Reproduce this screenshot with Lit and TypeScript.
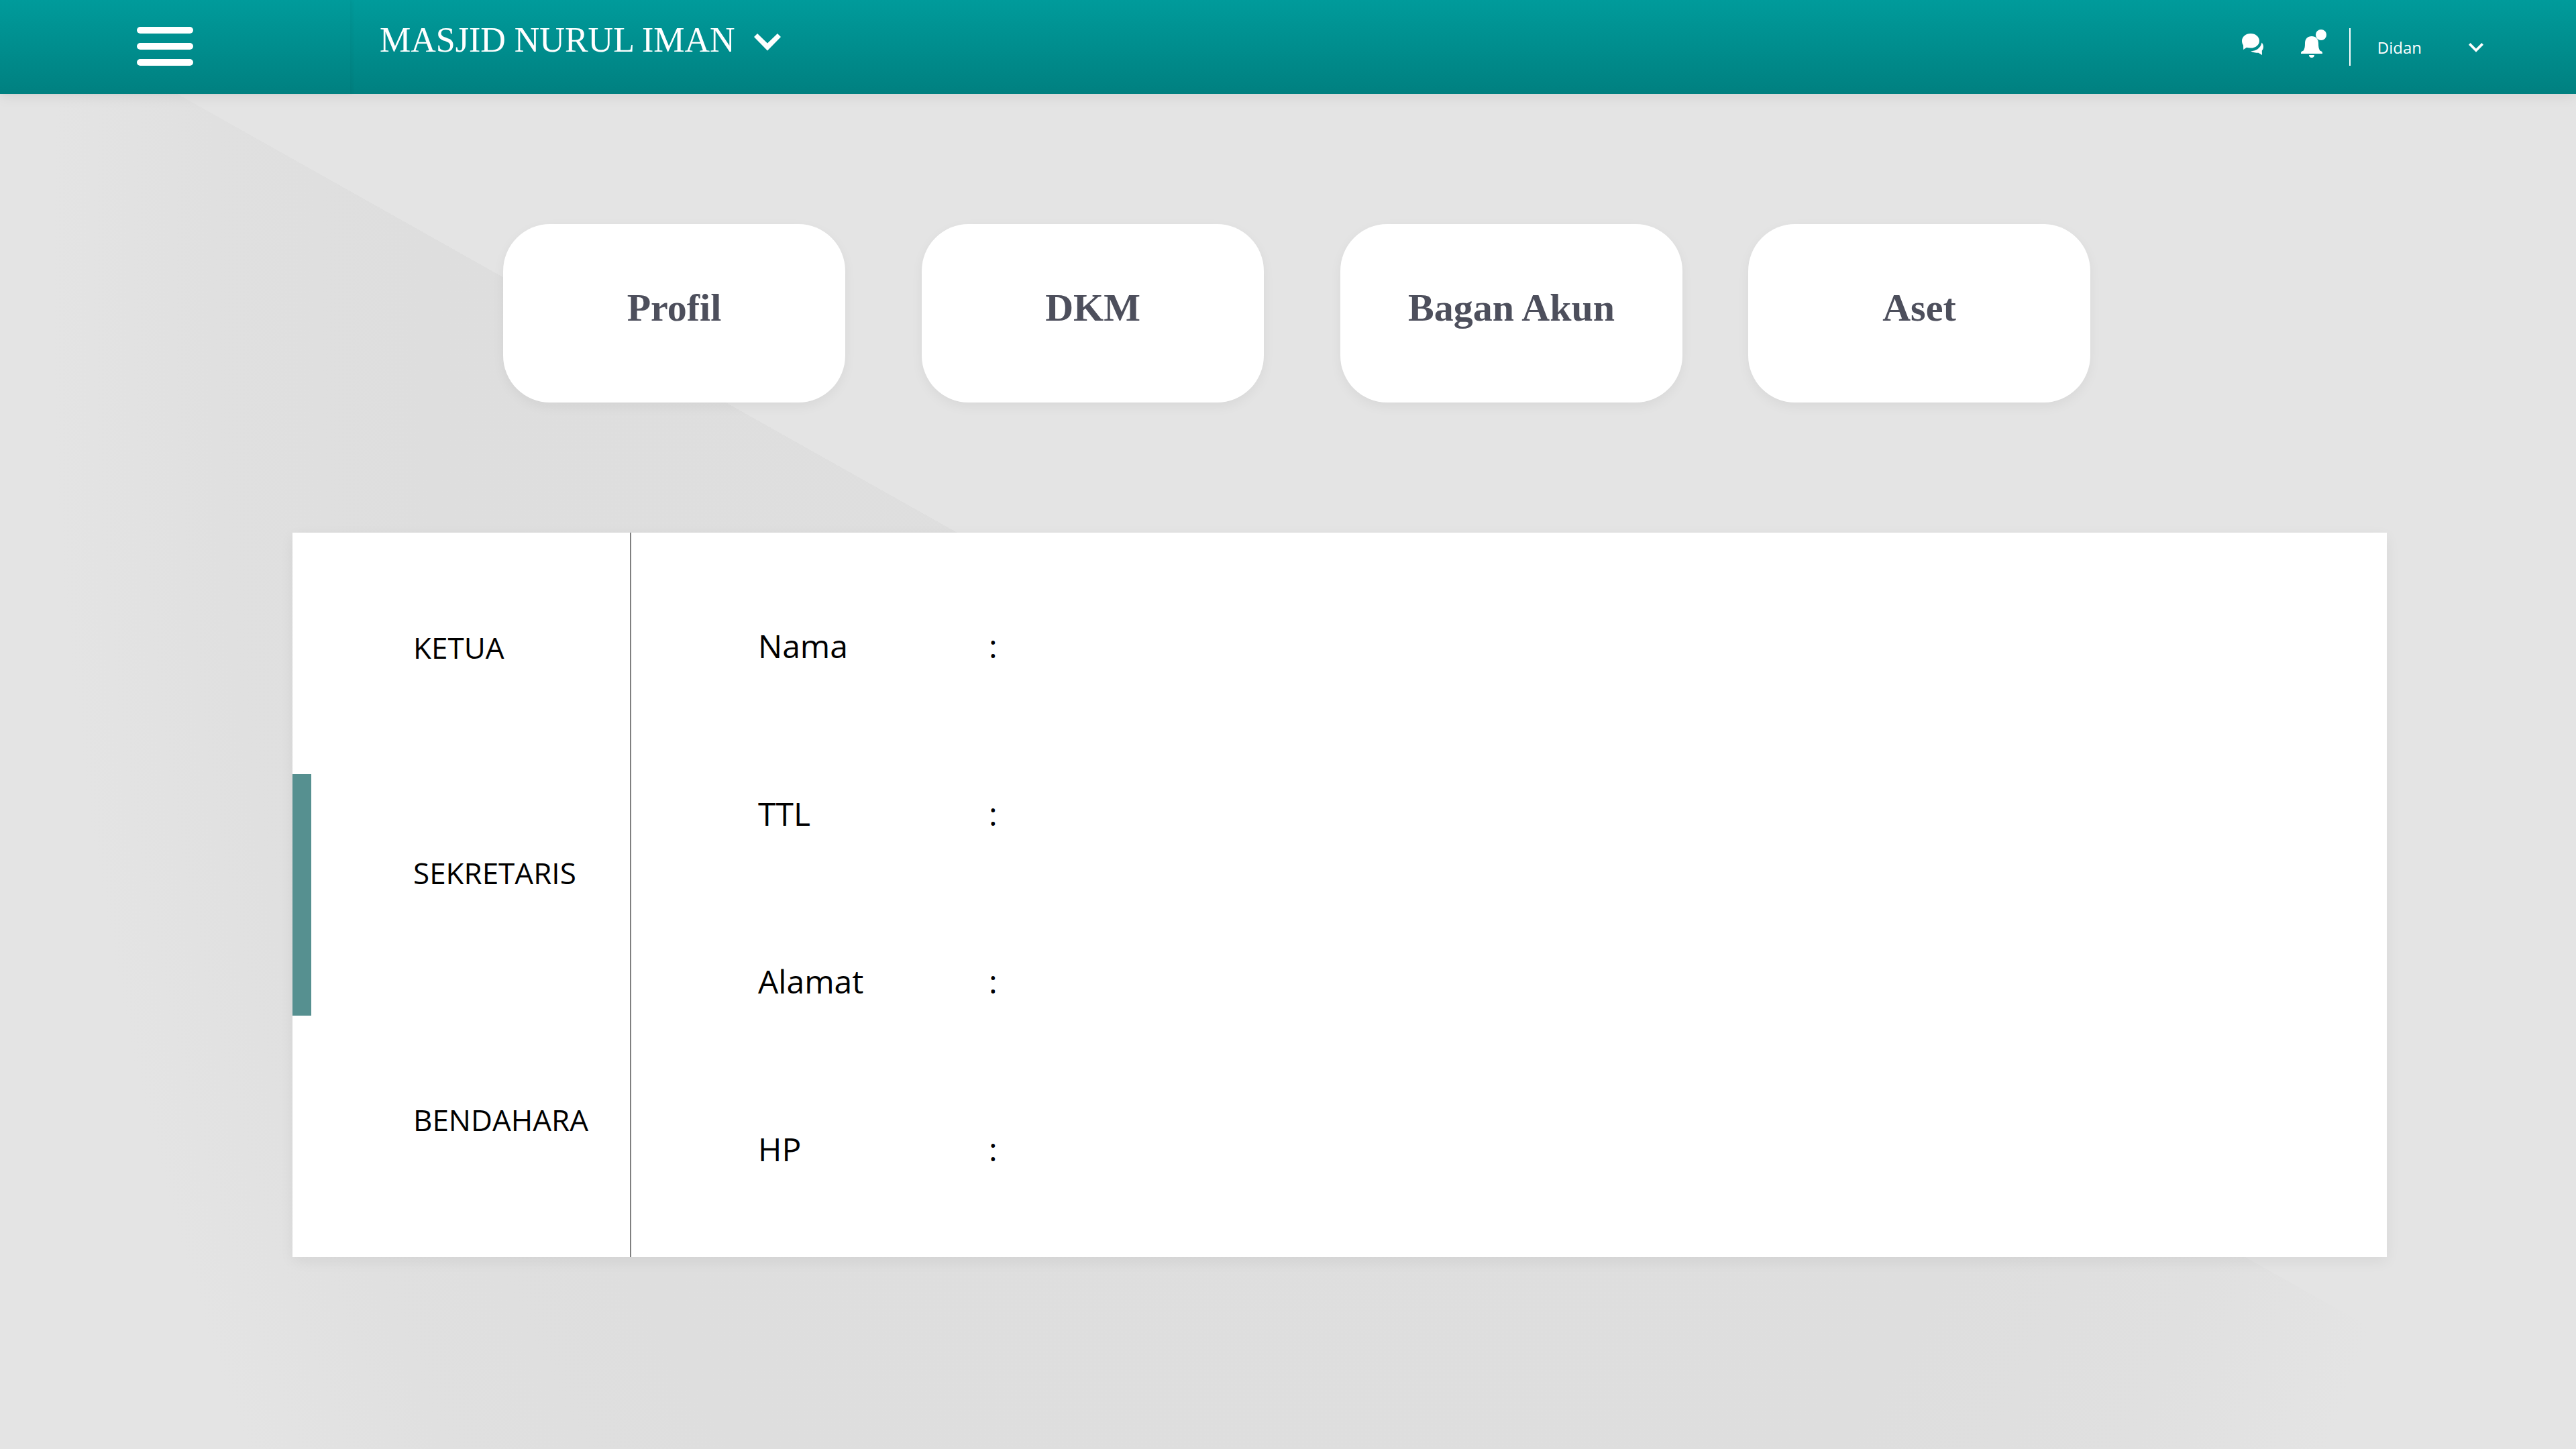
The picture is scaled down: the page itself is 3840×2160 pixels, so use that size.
import { LitElement, html, css, svg } from "lit";
import { customElement, state } from "lit/decorators.js";
import { classMap } from "lit/directives/class-map.js";

const roles = [
  { id: "ketua", label: "KETUA" },
  { id: "sekretaris", label: "SEKRETARIS" },
  { id: "bendahara", label: "BENDAHARA" },
];

const fields = ["Nama", "TTL", "Alamat", "HP"];

const sections = ["Profil", "DKM", "Bagan Akun", "Aset"];

const chatShapes = svg`
  <path d="M13 0C20.200 0 26 4.900 26 11C26 17.200 20.200 21.600 13 21.600C10.800 21.600 8.700 21.200 7 20.800L2.200 24L2 17.600C0.700 15.700 0 13.500 0 11C0 4.900 5.800 0 13 0Z"/>
  <path d="M29.600 13.600C31.200 15.600 32 17.600 32 19.800C32 22 31.200 24 29.800 25.600L30 32L24.600 28.700C20.600 28.700 16.600 28.200 13 26.400C20.400 26.200 27.800 22.400 29.600 13.600Z"/>`;

const bellShapes = svg`
  <path d="M16 0C22 0 26 4 26 10.500C26 15.500 26.400 19 28.600 21.800C31 22.300 32 23.300 32 25V26H0V25C0 23.300 1 22.300 3.400 21.800C5.600 19 6 15.500 6 10.500C6 4 10 0 16 0Z"/>
  <path d="M12 28H20C20 30.500 18.300 32 16 32C13.700 32 12 30.500 12 28Z"/>
  <circle cx="30" cy="-2" r="8"/>`;

@customElement("app-header")
export class AppHeader extends LitElement {
  static styles = css`
    :host {
      display: flex;
      height: 140px;
      background: linear-gradient(#009b9b, #008080);
      box-shadow: 0 3px 20px rgba(0, 0, 0, 0.08);
      color: #fff;
      font-family: "Open Sans", "Noto Sans", sans-serif;
    }
    button {
      display: flex;
      align-items: center;
      margin: 0;
      padding: 0;
      border: 0;
      background: none;
      color: inherit;
      font: inherit;
      cursor: pointer;
    }
    svg {
      display: block;
      fill: currentColor;
    }
    .menu {
      display: flex;
      align-items: center;
      box-sizing: border-box;
      width: 522px;
      padding: 0 0 2px 204px;
      box-shadow: 2px 0 6px rgba(0, 0, 0, 0.05);
    }
    .mosque {
      gap: 28px;
      padding: 0 0 20px 44px;
      font-family: "Liberation Serif", serif;
      font-size: 52px;
      line-height: 60px;
    }
    .mosque svg {
      margin-top: 6px;
    }
    .tools {
      display: flex;
      align-items: center;
      margin-left: auto;
      padding-right: 138px;
    }
    .icons {
      display: flex;
      align-items: flex-end;
      gap: 56px;
      padding-bottom: 10px;
    }
    .icons .chat {
      padding-bottom: 4px;
    }
    .rule {
      width: 2px;
      height: 56px;
      margin: 0 40px 0 34px;
      background: #fff;
    }
    .user {
      gap: 70px;
      padding-top: 2px;
      font-size: 24px;
      line-height: 32px;
    }
  `;

  render() {
    return html`
      <div class="menu">
        <button aria-label="Menu">
          <svg width="84" height="58" viewBox="0 0 84 58" aria-hidden="true">
            <rect width="84" height="10" rx="5" />
            <rect y="24" width="84" height="10" rx="5" />
            <rect y="48" width="84" height="10" rx="5" />
          </svg>
        </button>
      </div>
      <button class="mosque">
        <span>MASJID NURUL IMAN</span>
        <svg width="40" height="26" viewBox="0 0 40 26" aria-hidden="true">
          <path d="M5 0L20 14.500L35 0L40 5L20 25.500L0 5Z" />
        </svg>
      </button>
      <div class="tools">
        <div class="icons">
          <button class="chat" aria-label="Pesan">
            <svg width="32" height="32" viewBox="0 0 32 32" aria-hidden="true">${chatShapes}</svg>
          </button>
          <button aria-label="Notifikasi">
            <svg width="38" height="42" viewBox="0 -10 38 42" aria-hidden="true">${bellShapes}</svg>
          </button>
        </div>
        <span class="rule"></span>
        <button class="user">
          <span>Didan</span>
          <svg width="22" height="14" viewBox="0 0 22 14" aria-hidden="true">
            <path d="M2.600 0L11 8.400L19.400 0L22 2.700L11 13.800L0 2.700Z" />
          </svg>
        </button>
      </div>
    `;
  }
}

@customElement("app-root")
export class AppRoot extends LitElement {
  @state() private role = "sekretaris";

  static styles = css`
    :host {
      display: block;
      min-height: 100vh;
      background:
        linear-gradient(to top right, transparent 50.2%, #e4e4e4 50.2%),
        radial-gradient(48% 148% at 50% 20%, #dfdfdf 0, #dedede 70%, #e0e0e0 87%, #e4e4e4 100%);
      color: #000;
      font-family: "Open Sans", "Noto Sans", sans-serif;
    }
    button {
      margin: 0;
      border: 0;
      color: inherit;
      cursor: pointer;
    }
    main {
      padding: 194px 282px 200px 436px;
    }
    .cards {
      display: grid;
      grid-template-columns: 624fr 624fr 608fr 510fr;
      margin: 0 442px 194px 314px;
    }
    .card {
      width: 510px;
      max-width: 100%;
      height: 266px;
      padding: 0 0 16px;
      border-radius: 70px;
      background: #fff;
      box-shadow: 0 6px 18px rgba(0, 0, 0, 0.05);
      color: #4d4f5c;
      font: bold 58px/64px "Liberation Serif", serif;
    }
    .panel {
      display: grid;
      grid-template-columns: 503px 1fr;
      background: #fff;
      box-shadow: 0 6px 20px rgba(0, 0, 0, 0.06);
    }
    .roles {
      display: grid;
      grid-auto-rows: 360px;
    }
    .role {
      padding: 0 0 18px 152px;
      border-left: 28px solid transparent;
      background: none;
      font: 44px/60px "Open Sans", "Noto Sans", sans-serif;
      text-align: left;
    }
    .role.sekretaris {
      padding-bottom: 66px;
    }
    .role.bendahara {
      padding-bottom: 50px;
    }
    .role.active {
      border-left-color: #569090;
    }
    .fields {
      margin: 0;
      padding: 44px 0 0 189px;
      border-left: 2px solid #808080;
    }
    .field {
      display: grid;
      grid-template-columns: 344px 1fr;
      align-items: center;
      height: 250px;
      font-size: 48px;
      line-height: 64px;
    }
    .field dd {
      margin: 0;
    }
  `;

  render() {
    return html`
      <app-header></app-header>
      <main>
        <nav class="cards">
          ${sections.map((name) => html`<button class="card">${name}</button>`)}
        </nav>
        <section class="panel">
          <nav class="roles">
            ${roles.map(
              ({ id, label }) => html`
                <button
                  class=${classMap({ role: true, [id]: true, active: this.role === id })}
                  aria-pressed=${this.role === id}
                  @click=${() => (this.role = id)}
                >
                  ${label}
                </button>
              `,
            )}
          </nav>
          <dl class="fields">
            ${fields.map(
              (name) => html`
                <div class="field">
                  <dt>${name}</dt>
                  <dd>:</dd>
                </div>
              `,
            )}
          </dl>
        </section>
      </main>
    `;
  }
}
